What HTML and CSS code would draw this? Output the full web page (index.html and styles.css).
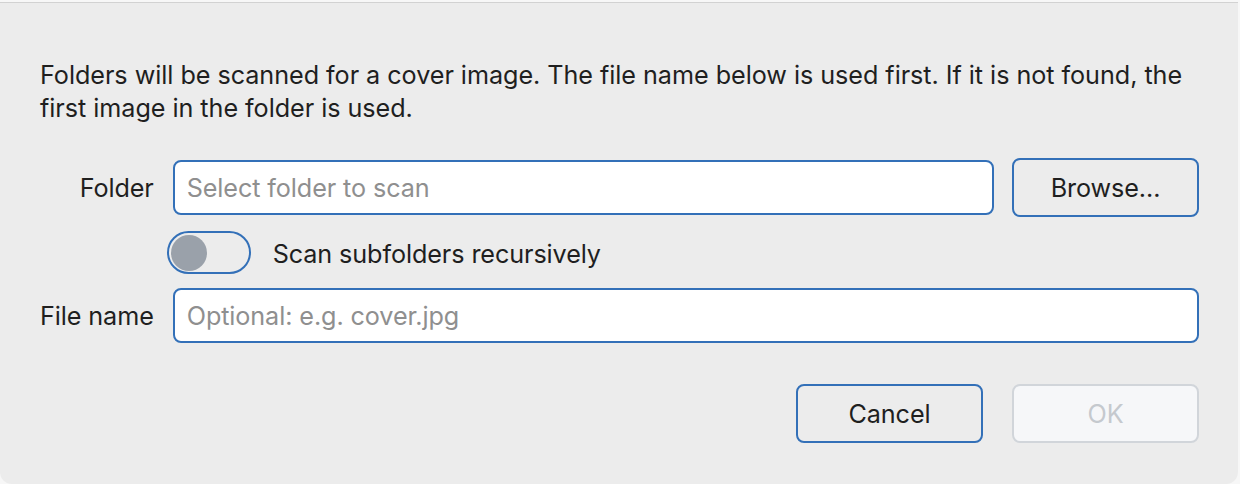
FILE: index.html
```html
<!DOCTYPE html>
<html lang="en">
<head>
<meta charset="utf-8">
<title>Scan folders for cover</title>
<link rel="stylesheet" href="styles.css">
</head>
<body>
<div class="dialog">
  <p class="intro">Folders will be scanned for a cover image. The file name below is used first. If it is not found, the first image in the folder is used.</p>
  <div class="form">
    <label class="label" for="folder">Folder</label>
    <input class="field" id="folder" type="text" placeholder="Select folder to scan">
    <button class="btn" type="button">Browse...</button>

    <div class="toggle-row">
      <span class="toggle"><span class="knob"></span></span>
      <span class="toggle-label">Scan subfolders recursively</span>
    </div>

    <label class="label" for="fname">File name</label>
    <input class="field wide" id="fname" type="text" placeholder="Optional: e.g. cover.jpg">
  </div>
  <div class="actions">
    <button class="btn" type="button">Cancel</button>
    <button class="btn disabled" type="button" disabled>OK</button>
  </div>
</div>
</body>
</html>
```

FILE: styles.css
```css
html, body {
  margin: 0;
  padding: 0;
  background: #f7f7f7;
}

body {
  padding-top: 2px;
  font-family: Inter, "Noto Sans", "Liberation Sans", sans-serif;
  color: #1f1f1f;
}

.dialog {
  box-sizing: border-box;
  width: 1238px;
  height: 482px;
  background: #ececec;
  border-top: 1px solid #d2d2d2;
  border-radius: 0 0 12px 12px;
  padding: 56px 39px 0 40px;
}

.intro {
  margin: 0;
  font-size: 25.2px;
  line-height: 33px;
  letter-spacing: -0.05px;
  color: #1f1f1f;
}

.form {
  margin-top: 33px;
  display: grid;
  grid-template-columns: max-content 1fr 187px;
  column-gap: 18px;
  row-gap: 14px;
  align-items: center;
}

.label {
  font-size: 25.2px;
  letter-spacing: -0.1px;
  text-align: right;
}

.field {
  box-sizing: border-box;
  height: 55px;
  border: 2px solid #3370b8;
  border-radius: 8px;
  background: #ffffff;
  padding: 0 12px;
  font-family: inherit;
  font-size: 25.2px;
  letter-spacing: -0.1px;
  color: #1f1f1f;
  outline: none;
  margin-left: 1px;
}

.field::placeholder {
  color: #8f8f8f;
}

.wide {
  grid-column: 2 / 4;
}

.btn {
  box-sizing: border-box;
  height: 59px;
  width: 187px;
  border: 2px solid #3370b8;
  border-radius: 8px;
  background: #ececec;
  font-family: inherit;
  font-size: 25.2px;
  letter-spacing: -0.1px;
  color: #1f1f1f;
  padding: 0;
}

.toggle-row {
  grid-column: 2 / 4;
  display: flex;
  align-items: center;
  gap: 22px;
  margin-left: -5px;
}

.toggle {
  box-sizing: border-box;
  width: 84px;
  height: 43px;
  border: 2px solid #3370b8;
  border-radius: 22px;
  background: #ececec;
  display: flex;
  align-items: center;
  padding-left: 2px;
}

.knob {
  width: 36px;
  height: 36px;
  border-radius: 50%;
  background: #9aa1aa;
}

.toggle-label {
  font-size: 25.2px;
  letter-spacing: -0.1px;
  color: #1f1f1f;
  padding-top: 3px;
}

.actions {
  margin-top: 41px;
  display: flex;
  justify-content: flex-end;
  gap: 29px;
}

.btn.disabled {
  background: #f6f7f9;
  border-color: #d1d5da;
  color: #c5c9ce;
}
```
